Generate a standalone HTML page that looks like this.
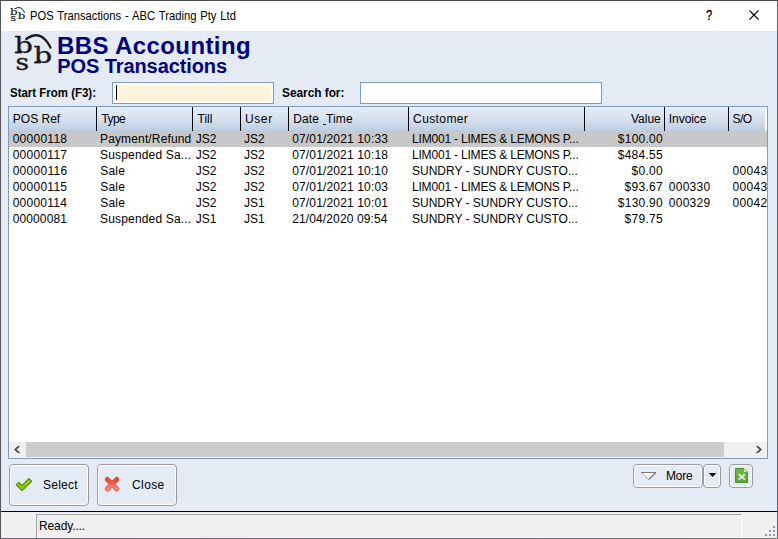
<!DOCTYPE html>
<html><head><meta charset="utf-8"><title>POS Transactions</title>
<style>
*{box-sizing:border-box;margin:0;padding:0}
html,body{width:778px;height:539px;overflow:hidden;background:#fff}
body{font-family:"Liberation Sans",sans-serif;font-size:12px;color:#000;position:relative}
.abs{position:absolute}
#win{position:absolute;left:0;top:0;width:778px;height:539px;background:#e4ebf5;overflow:hidden}
#titlebar{position:absolute;left:1px;top:1px;width:776px;height:30px;background:#fff}
#ttext{position:absolute;left:29px;top:8px;font-size:12px;line-height:15px;white-space:nowrap;transform:scaleX(0.935);transform-origin:0 0;word-spacing:0.8px}
.bt{position:absolute;white-space:nowrap;font-weight:bold;color:#000080}
#h1{left:57px;top:32.3px;font-size:24px;line-height:28px;letter-spacing:0.4px}
#h2{left:57.3px;top:55.3px;font-size:20px;line-height:22px;letter-spacing:-0.09px}
.lbl{position:absolute;font-weight:bold;font-size:12px;line-height:15px;white-space:nowrap;transform-origin:0 0}
.inp{position:absolute;border:1px solid #7f9db9;height:22px;background:#fff}
#grid{position:absolute;left:8px;top:106px;width:760px;height:353px;border:1px solid #7f9db9;background:#fff;overflow:hidden}
#hdr{position:absolute;left:0;top:0;width:756px;height:24px;background:linear-gradient(#e4ecf6 0%,#d8e3f0 45%,#bccde3 100%)}
.hc{position:absolute;top:0;height:24px;font-size:12px;line-height:24px;white-space:nowrap;overflow:hidden}
.hc span{position:absolute;top:0}
.us{display:inline-block;position:relative !important;top:-1px !important;width:3px;overflow:hidden;vertical-align:top;margin-left:0.2px;margin-right:0.3px}
.sep{position:absolute;top:0;width:1px;height:24px;background:#000}
.row{position:absolute;left:0;width:758px;height:16px;font-size:12px;line-height:16px;white-space:nowrap}
.row span{position:absolute;top:0;overflow:hidden;white-space:nowrap}
.sel{background:#c8c8c8}
#sb{position:absolute;left:0;top:335px;width:758px;height:16px;background:#f0f0f0}
#thumb{position:absolute;left:17px;top:0;width:698px;height:15px;background:#cdcdcd}
.btn{position:absolute;border:1px solid #9c9c9c;border-radius:4px;box-shadow:inset 0 0 0 1px #fff;background:#e4ebf5;font-size:12px;white-space:nowrap}
#status{position:absolute;left:1px;top:512px;width:776px;height:26px;background:#f0f0f0}
</style></head><body>
<div id="win">
<div id="titlebar">
<svg class="abs" style="left:8.1px;top:4.8px" width="17.82" height="17.82" viewBox="0 0 44 44"><g font-family="'DejaVu Serif',serif" font-size="23" fill="#111" stroke="#111" stroke-width="0.45"><text transform="translate(2.2 21.3) scale(1.27 1)">b</text><text transform="translate(3.6 37.7) scale(1.15 1)">s</text><text transform="translate(21.4 31.3) scale(1.27 1)">b</text></g><path d="M14.2 7 Q29 -3.5 38.5 15.5" fill="none" stroke="#111" stroke-width="2.4" stroke-linecap="round"/></svg>
<div id="ttext">POS Transactions - ABC Trading Pty Ltd</div>
<div class="abs" style="left:704.6px;top:6px;font-size:14px;line-height:16px;transform:scaleX(0.8);transform-origin:0 0;-webkit-text-stroke:0.3px #000">?</div>
<svg class="abs" style="left:747px;top:8px" width="12" height="12" viewBox="0 0 12 12"><path d="M1.5 1.5 L10.5 10.5 M10.5 1.5 L1.5 10.5" stroke="#000" stroke-width="1.1" fill="none"/></svg>
</div>
<svg class="abs" style="left:12px;top:32px" width="44" height="44" viewBox="0 0 44 44"><g font-family="'DejaVu Serif',serif" font-size="23" fill="#1a1a1a" stroke="#1a1a1a" stroke-width="0.35"><text transform="translate(2.2 21.3) scale(1.27 1)">b</text><text transform="translate(3.6 37.7) scale(1.15 1)">s</text><text transform="translate(21.4 31.3) scale(1.27 1)">b</text></g><path d="M3.4 20.5h6.5M22.6 30.5h6.5" stroke="#1a1a1a" stroke-width="1.7" fill="none"/><path d="M14.2 7 Q29 -3.5 38.5 15.5" fill="none" stroke="#1a1a1a" stroke-width="2.3" stroke-linecap="round"/></svg>
<div class="bt" id="h1">BBS Accounting</div>
<div class="bt" id="h2">POS Transactions</div>
<div class="lbl" style="left:10px;top:86px;transform:scaleX(0.955)">Start From (F3):</div>
<div class="inp" style="left:112px;top:82px;width:162px"><div class="abs" style="left:3px;top:2px;width:155px;height:16px;background:#fff3dd"></div><div class="abs" style="left:3px;top:2px;width:1px;height:15px;background:#000"></div></div>
<div class="lbl" style="left:282px;top:86px;transform:scaleX(0.985)">Search for:</div>
<div class="inp" style="left:360px;top:82px;width:242px"></div>
<div id="grid">
<div id="hdr">
<div class="hc" style="left:0px;width:87px"><span style="left:3.81px;letter-spacing:-0.001px">POS Ref</span></div>
<div class="hc" style="left:88px;width:95px"><span style="left:4.38px;letter-spacing:-0.576px">Type</span></div>
<div class="hc" style="left:184px;width:47px"><span style="left:4.47px;letter-spacing:0.024px">Till</span></div>
<div class="hc" style="left:232px;width:47px"><span style="left:4.00px;letter-spacing:0.596px">User</span></div>
<div class="hc" style="left:280px;width:119px"><span style="left:4.14px;letter-spacing:0.134px">Date <span class="us">_</span>Time</span></div>
<div class="hc" style="left:400px;width:175px"><span style="left:4.12px;letter-spacing:0.387px">Customer</span></div>
<div class="hc" style="left:576px;width:79px"><span style="right:3.23px;letter-spacing:0.021px">Value</span></div>
<div class="hc" style="left:656px;width:63px"><span style="left:3.84px;letter-spacing:-0.062px">Invoice</span></div>
<div class="hc" style="left:720px;width:36px"><span style="left:3.53px;letter-spacing:-0.500px">S/O</span></div>
<div class="sep" style="left:87px"></div>
<div class="sep" style="left:183px"></div>
<div class="sep" style="left:231px"></div>
<div class="sep" style="left:279px"></div>
<div class="sep" style="left:399px"></div>
<div class="sep" style="left:575px"></div>
<div class="sep" style="left:655px"></div>
<div class="sep" style="left:719px"></div>
</div>
<div class="row sel" style="top:24px"><span style="left:3.64px;letter-spacing:0.269px">00000118</span><span style="left:91.00px;letter-spacing:0.143px">Payment/Refund</span><span style="left:186.69px;letter-spacing:0.027px">JS2</span><span style="left:235.03px;letter-spacing:0.013px">JS2</span><span style="left:283.18px;letter-spacing:0.156px">07/01/2021 10:33</span><span style="left:403.00px;letter-spacing:-0.189px">LIM001 - LIMES &amp; LEMONS P...</span><span style="right:104.11px;letter-spacing:0.235px">$100.00</span></div>
<div class="row" style="top:40px"><span style="left:3.64px;letter-spacing:0.271px">00000117</span><span style="left:91.10px;letter-spacing:0.164px">Suspended Sa...</span><span style="left:186.72px;letter-spacing:0.032px">JS2</span><span style="left:234.99px;letter-spacing:0.022px">JS2</span><span style="left:283.18px;letter-spacing:0.154px">07/01/2021 10:18</span><span style="left:402.99px;letter-spacing:-0.189px">LIM001 - LIMES &amp; LEMONS P...</span><span style="right:104.00px;letter-spacing:0.276px">$484.55</span></div>
<div class="row" style="top:56px"><span style="left:3.64px;letter-spacing:0.292px">00000116</span><span style="left:91.20px;letter-spacing:0.221px">Sale</span><span style="left:186.72px;letter-spacing:0.032px">JS2</span><span style="left:234.99px;letter-spacing:0.022px">JS2</span><span style="left:283.18px;letter-spacing:0.151px">07/01/2021 10:10</span><span style="left:403.05px;letter-spacing:-0.018px">SUNDRY - SUNDRY CUSTO...</span><span style="right:104.06px;letter-spacing:0.286px">$0.00</span><span style="left:723.50px;width:34.50px;letter-spacing:0.326px">00043</span></div>
<div class="row" style="top:72px"><span style="left:3.64px;letter-spacing:0.273px">00000115</span><span style="left:91.20px;letter-spacing:0.221px">Sale</span><span style="left:186.72px;letter-spacing:0.032px">JS2</span><span style="left:234.99px;letter-spacing:0.022px">JS2</span><span style="left:283.18px;letter-spacing:0.155px">07/01/2021 10:03</span><span style="left:402.99px;letter-spacing:-0.189px">LIM001 - LIMES &amp; LEMONS P...</span><span style="right:103.89px;letter-spacing:0.327px">$93.67</span><span style="left:659.81px;letter-spacing:0.256px">000330</span><span style="left:723.50px;width:34.50px;letter-spacing:0.326px">00043</span></div>
<div class="row" style="top:88px"><span style="left:3.64px;letter-spacing:0.247px">00000114</span><span style="left:91.20px;letter-spacing:0.221px">Sale</span><span style="left:186.72px;letter-spacing:0.032px">JS2</span><span style="left:234.99px;letter-spacing:-0.043px">JS1</span><span style="left:283.18px;letter-spacing:0.156px">07/01/2021 10:01</span><span style="left:403.05px;letter-spacing:-0.018px">SUNDRY - SUNDRY CUSTO...</span><span style="right:104.11px;letter-spacing:0.236px">$130.90</span><span style="left:659.81px;letter-spacing:0.248px">000329</span><span style="left:723.50px;width:34.50px;letter-spacing:0.326px">00042</span></div>
<div class="row" style="top:104px"><span style="left:3.64px;letter-spacing:0.137px">00000081</span><span style="left:91.10px;letter-spacing:0.164px">Suspended Sa...</span><span style="left:186.72px;letter-spacing:0.076px">JS1</span><span style="left:234.99px;letter-spacing:-0.043px">JS1</span><span style="left:283.14px;letter-spacing:0.132px">21/04/2020 09:54</span><span style="left:403.05px;letter-spacing:-0.018px">SUNDRY - SUNDRY CUSTO...</span><span style="right:103.97px;letter-spacing:0.311px">$79.75</span></div>
<div id="sb"><div id="thumb"></div>
<svg class="abs" style="left:0;top:0" width="758" height="16" viewBox="0 0 758 16"><path d="M11.2 4 L8.8 4 L5 7.5 L8.8 11 L11.2 11 L7.6 7.5 Z M746.8 4 L749.2 4 L753 7.5 L749.2 11 L746.8 11 L750.4 7.5 Z" fill="#4d4d4d"/></svg>
</div>
</div>
<div class="btn" style="left:9px;top:464px;width:80px;height:42px"><svg class="abs" style="left:5px;top:11px" width="20" height="18" viewBox="0 0 20 18"><defs><linearGradient id="gg" x1="0" y1="0" x2="0.4" y2="1"><stop offset="0" stop-color="#bfe030"/><stop offset="0.5" stop-color="#a2d010"/><stop offset="1" stop-color="#86c000"/></linearGradient></defs><path d="M1.3 8.9 L3.8 6.5 L7 9.6 L13.9 2.7 L16.5 5.2 L7 14.6 Z" fill="url(#gg)" stroke="#4f9208" stroke-width="1.3" stroke-linejoin="round"/></svg><span class="abs" style="left:33px;top:13px;line-height:15px;letter-spacing:0.25px">Select</span></div>
<div class="btn" style="left:97px;top:464px;width:80px;height:42px"><svg class="abs" style="left:6px;top:11px" width="18" height="18" viewBox="0 0 18 18"><defs><linearGradient id="rg" x1="0" y1="0" x2="0" y2="1"><stop offset="0" stop-color="#e9442c"/><stop offset="1" stop-color="#f5897b"/></linearGradient></defs><path d="M3.4 3.4 L12.7 12.8 M12.7 3.4 L3.4 12.8" fill="none" stroke="#de5442" stroke-width="5" stroke-linecap="round"/><path d="M3.4 3.4 L12.7 12.8 M12.7 3.4 L3.4 12.8" fill="none" stroke="url(#rg)" stroke-width="3.4" stroke-linecap="round"/></svg><span class="abs" style="left:34px;top:13px;line-height:15px;letter-spacing:0.4px">Close</span></div>
<div class="btn" style="left:633px;top:464px;width:70px;height:24px"><svg class="abs" style="left:6px;top:6px" width="18" height="10" viewBox="0 0 18 10"><path d="M1.2 1.5 L15.8 1.5 L8.5 8.6 Z" fill="#fafafa"/><path d="M1.2 1.5 L8.5 8.6" stroke="#b4b4b4" stroke-width="1" fill="none"/><path d="M15.8 1.5 L8.5 8.6" stroke="#6a6a6a" stroke-width="1.1" fill="none"/><path d="M1 1.5 L16 1.5" stroke="#767676" stroke-width="1" fill="none"/></svg><span class="abs" style="left:32px;top:4px;line-height:15px;letter-spacing:-0.25px">More</span></div>
<div class="btn" style="left:703px;top:464px;width:18px;height:24px"><svg class="abs" style="left:4px;top:8px" width="10" height="5" viewBox="0 0 10 5"><path d="M0.8 0.1 L8.3 0.1 L4.55 4.1 Z" fill="#000"/></svg></div>
<div class="btn" style="left:729px;top:464px;width:24px;height:24px"><svg class="abs" style="left:5px;top:3px" width="14" height="16" viewBox="0 0 14 16"><defs><linearGradient id="xg" x1="0" y1="0" x2="0" y2="1"><stop offset="0" stop-color="#74b843"/><stop offset="1" stop-color="#58a632"/></linearGradient></defs><path d="M0.5 0.5 L9 0.5 L12.5 4 L12.5 14.5 L0.5 14.5 Z" fill="url(#xg)" stroke="#4b9428" stroke-width="1"/><path d="M9 0.8 L9 4 L12.2 4 Z" fill="#e6f5dc"/><path d="M3.6 6 L9.8 11.6 M9.6 6.4 L3.6 11.6" stroke="#fff" stroke-width="1.5" fill="none"/></svg></div>
<div class="abs" style="left:1px;top:511px;width:776px;height:1px;background:#000"></div>
<div id="status">
<div class="abs" style="left:35px;top:2px;width:706px;height:24px;border-top:1px solid #a0a0a0;border-left:1px solid #a0a0a0;border-right:1px solid #fff"><span class="abs" style="left:2px;top:4px;line-height:15px;font-size:12px;letter-spacing:-0.12px">Ready....</span></div>
<svg class="abs" style="left:763px;top:13px" width="12" height="12" viewBox="0 0 12 12"><g fill="#9a9a9a"><rect x="9" y="1" width="2" height="2"/><rect x="5" y="5" width="2" height="2"/><rect x="9" y="5" width="2" height="2"/><rect x="1" y="9" width="2" height="2"/><rect x="5" y="9" width="2" height="2"/><rect x="9" y="9" width="2" height="2"/></g></svg>
</div>
<div class="abs" style="left:0;top:0;width:778px;height:1px;background:#4a4a4a"></div>
<div class="abs" style="left:0;top:0;width:1px;height:539px;background:#55575a"></div>
<div class="abs" style="left:777px;top:0;width:1px;height:539px;background:#5a6472"></div>
<div class="abs" style="left:0;top:538px;width:778px;height:1px;background:linear-gradient(90deg,#6b6473,#7b7b7b)"></div>
</div>
</body></html>
